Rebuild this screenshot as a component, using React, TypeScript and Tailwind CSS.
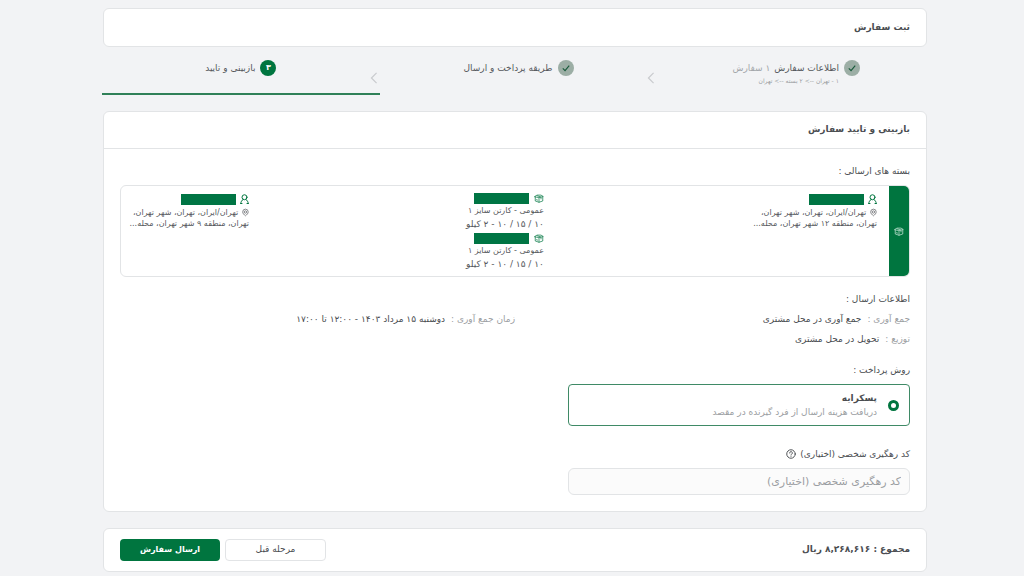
import { ReactNode, useState } from "react";

const BoxIcon = ({ className }: { className?: string }) => (
    <svg viewBox="0 0 20 18" className={className} fill="none" stroke="currentColor" strokeWidth="1.6" strokeLinejoin="round" strokeLinecap="round">
        <path d="M1.500 5 6 2.200h8L18.500 5 10 7zM2.500 5.500V14l7.500 2.500 7.500-2.500V5.500M10 7v9.500M6.500 3.500l7.500 2.700v3.600M5 11.500l2 .6" />
    </svg>
);

const UserIcon = ({ className }: { className?: string }) => (
    <svg viewBox="0 0 18 20" className={className} fill="none" stroke="currentColor" strokeWidth="2" strokeLinecap="round" strokeLinejoin="round">
        <circle cx="9" cy="6.500" r="5" />
        <path d="M1.500 19c.3-3.500 1.800-6 4.500-8M16.500 19c-.3-3.500-1.800-6-4.500-8M1.500 19H4M14 19h2.500" />
    </svg>
);

const PinIcon = ({ className }: { className?: string }) => (
    <svg viewBox="0 0 20 22" className={className} fill="none" stroke="currentColor" strokeWidth="2" strokeLinejoin="round">
        <path d="M10 20.500C6 17.500 2 14 2 9.300a8 8 0 0 1 16 0c0 4.700-4 8.200-8 11.200z" />
        <circle cx="10" cy="9.500" r="3.500" />
    </svg>
);

const HelpIcon = ({ className }: { className?: string }) => (
    <svg viewBox="0 0 20 20" className={className} fill="none" stroke="currentColor" strokeWidth="1.900" strokeLinecap="round">
        <circle cx="10" cy="10" r="8.500" />
        <path d="M7.300 8a2.700 2.700 0 1 1 4 2.300c-.9.500-1.300.9-1.300 1.700M10 14.600v.1" />
    </svg>
);

const ChevronIcon = () => (
    <svg viewBox="0 0 8 14" className="h-3 w-2" fill="none" stroke="#c9cbce" strokeWidth="1.4">
        <path d="M7 1 1 7l6 6" />
    </svg>
);

const DoneBadge = () => (
    <span className="flex size-4 shrink-0 items-center justify-center rounded-full bg-[#9caea5]">
        <svg viewBox="0 0 10 10" className="size-2" fill="none" stroke="#17593a" strokeWidth="1.4">
            <path d="m1 5.500 2.800 2.800L9 2" />
        </svg>
    </span>
);

interface StepProps {
    badge: ReactNode;
    title: string;
    extra?: string;
    detail?: string;
    active?: boolean;
    last?: boolean;
}

const Step = ({ badge, title, extra, detail, active, last }: StepProps) => (
    <li className={`flex h-12 flex-1 items-start pt-[13px] ${active ? "border-b-2 border-[#2f8058]" : ""}`}>
        <div className="flex flex-1 justify-center gap-[5px]">
            {badge}
            <div>
                <div className="text-[9px] leading-4 text-[#55585c]">
                    {title}
                    {extra && <span className="mr-1 text-[#a3a6aa]">{extra}</span>}
                </div>
                {detail && <div className="text-[6px] leading-[10px] text-[#9b9ea2]">{detail}</div>}
            </div>
        </div>
        {!last && (
            <span className="mr-0.5 -ml-2.5 pt-3">
                <ChevronIcon />
            </span>
        )}
    </li>
);

const Address = ({ lines }: { lines: string[] }) => (
    <div className="w-[116px] text-[8px] leading-[11px] whitespace-nowrap text-[#55585c]">
        <div className="flex h-4 items-center gap-1">
            <UserIcon className="h-[10px] w-[9px] text-[#00753f]" />
            <span className="h-[11px] w-[55px] bg-[#007544]" />
        </div>
        <div className="flex items-center gap-1">
            <PinIcon className="h-[9px] w-2" />
            {lines[0]}
        </div>
        <div>{lines[1]}</div>
    </div>
);

const Parcel = () => (
    <div className="text-[#55585c]">
        <div className="flex h-[14px] items-center gap-[5px]">
            <BoxIcon className="h-[9px] w-[10px] text-[#1f8658]" />
            <span className="h-[11px] w-[55px] bg-[#007544]" />
        </div>
        <div className="text-[8px] leading-[12px]">عمومی - کارتن سایز ۱</div>
        <div className="text-[9px] leading-[14px]">۱۰ / ۱۵ / ۱۰ - ۲ کیلو</div>
    </div>
);

const Info = ({ label, value }: { label: string; value: string }) => (
    <div className="flex w-1/2 gap-1.5 leading-5">
        <span className="text-[#9b9ea2]">{label} :</span>
        <span>{value}</span>
    </div>
);

const App = () => {
    const [trackingCode, setTrackingCode] = useState<string>("");

    return (
        <div
            dir="rtl"
            className="min-h-screen bg-[#f2f3f5] pt-2 pr-[97px] pb-1 pl-[103px] font-['DejaVu_Sans',sans-serif] text-[9px] text-[#4a4d51]"
        >
            <header className="flex h-[39px] items-center rounded-md border border-[#e2e4e6] bg-white px-4">
                <h1 className="font-bold">ثبت سفارش</h1>
            </header>

            <ol className="-mr-2 -ml-px flex">
                <Step
                    badge={<DoneBadge />}
                    title="اطلاعات سفارش"
                    extra="۱ سفارش"
                    detail="۱ - تهران --> ۲ بسته --> تهران"
                />
                <Step badge={<DoneBadge />} title="طریقه پرداخت و ارسال" />
                <Step
                    badge={
                        <span className="flex size-4 shrink-0 items-center justify-center rounded-full bg-[#00753f] text-[8px] font-bold text-white">
                            ۳
                        </span>
                    }
                    title="بازبینی و تایید"
                    active
                    last
                />
            </ol>

            <main className="mt-4 rounded-md border border-[#e2e4e6] bg-white">
                <h2 className="flex h-[37px] items-center border-b border-[#e2e4e6] px-4 font-bold">
                    بازبینی و تایید سفارش
                </h2>
                <div className="px-4 pt-3 pb-4">
                    <h3 className="leading-5">بسته های ارسالی :</h3>
                    <section className="mt-1 flex h-[92px] overflow-hidden rounded-md border border-[#e2e4e6]">
                        <div className="flex w-5 items-center justify-center bg-[#00753f] text-[#b5dcc9]">
                            <BoxIcon className="h-[9px] w-[10px]" />
                        </div>
                        <div className="flex flex-1 justify-between px-3 pt-[5px]">
                            <Address lines={["تهران/ایران، تهران، شهر تهران،", "تهران، منطقه ۱۲ شهر تهران، محله..."]} />
                            <div>
                                <Parcel />
                                <Parcel />
                            </div>
                            <Address lines={["تهران/ایران، تهران، شهر تهران،", "تهران، منطقه ۹ شهر تهران، محله..."]} />
                        </div>
                    </section>

                    <section className="mt-3">
                        <h3 className="leading-5">اطلاعات ارسال :</h3>
                        <div className="flex">
                            <Info label="جمع آوری" value="جمع آوری در محل مشتری" />
                            <Info label="زمان جمع آوری" value="دوشنبه ۱۵ مرداد ۱۴۰۳ - ۱۲:۰۰ تا ۱۷:۰۰" />
                        </div>
                        <Info label="توزیع" value="تحویل در محل مشتری" />
                    </section>

                    <section className="mt-[11px]">
                        <h3 className="leading-5">روش پرداخت :</h3>
                        <label className="mt-1 flex h-[42px] w-[342px] items-center gap-[11px] rounded border border-[#3f8a66] px-[10px]">
                            <input
                                type="radio"
                                name="payment"
                                defaultChecked
                                className="size-[11px] appearance-none rounded-full border-[#00753f] bg-white checked:border-[3px]"
                            />
                            <span>
                                <span className="block leading-[14px] font-bold">پسکرایه</span>
                                <span className="block leading-[14px] text-[#9b9ea2]">دریافت هزینه ارسال از فرد گیرنده در مقصد</span>
                            </span>
                        </label>
                    </section>

                    <section className="mt-[18px] w-[342px]">
                        <div className="flex items-center gap-1 leading-5">
                            <label htmlFor="tracking">کد رهگیری شخصی (اختیاری)</label>
                            <HelpIcon className="size-[10px]" />
                        </div>
                        <input
                            id="tracking"
                            type="text"
                            value={trackingCode}
                            onChange={e => setTrackingCode(e.target.value)}
                            placeholder="کد رهگیری شخصی (اختیاری)"
                            className="mt-1 h-[27px] w-full rounded-md border border-[#e2e4e6] bg-[#fbfbfb] px-2 text-[11px] placeholder:text-[#9b9ea2]"
                        />
                    </section>
                </div>
            </main>

            <footer className="mt-4 flex h-11 items-center gap-[5px] rounded-md border border-[#e2e4e6] bg-white px-4">
                <strong className="flex-1">مجموع : ۸,۲۶۸,۶۱۶ ریال</strong>
                <button type="button" className="h-[22px] w-[101px] rounded border border-[#e2e4e6] bg-white">
                    مرحله قبل
                </button>
                <button type="button" className="h-[22px] w-[100px] rounded bg-[#00753f] text-[8px] font-bold text-white">
                    ارسال سفارش
                </button>
            </footer>
        </div>
    );
};

export default App;
